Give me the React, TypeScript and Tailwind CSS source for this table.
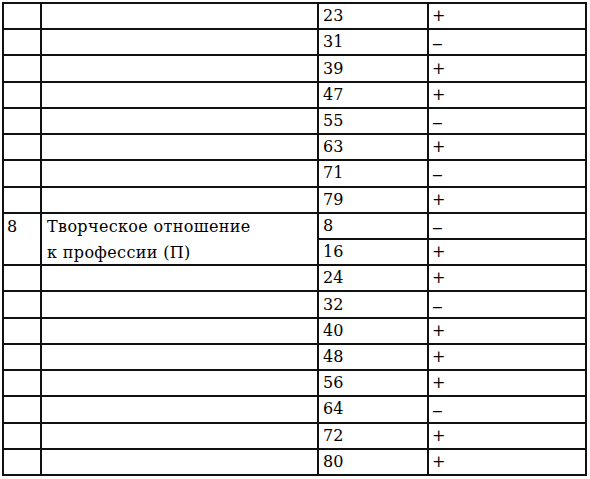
const rows: { n?: string; label?: string[]; key: string; sign: string }[] = [
  { key: "23", sign: "+" },
  { key: "31", sign: "–" },
  { key: "39", sign: "+" },
  { key: "47", sign: "+" },
  { key: "55", sign: "–" },
  { key: "63", sign: "+" },
  { key: "71", sign: "–" },
  { key: "79", sign: "+" },
  { n: "8", label: ["Творческое отношение", "к профессии (П)"], key: "8", sign: "–" },
  { key: "16", sign: "+" },
  { key: "24", sign: "+" },
  { key: "32", sign: "–" },
  { key: "40", sign: "+" },
  { key: "48", sign: "+" },
  { key: "56", sign: "+" },
  { key: "64", sign: "–" },
  { key: "72", sign: "+" },
  { key: "80", sign: "+" },
];

const cell = "border-r-2 border-b-2 border-[#111] flex items-center leading-[26px]";

function Sign({ s }: { s: string }) {
  if (s === "+") return <span>+</span>;
  // the dash in the source is wider and sits lower than a plain en dash
  return <span className="inline-block origin-left scale-x-[1.35] translate-y-[2px]">–</span>;
}

export default function App() {
  return (
    <div className="w-[590px] h-[479px] bg-white overflow-hidden pt-[2px] pl-[2px]">
      <div
        className="grid grid-cols-[38px_277px_110px_158px] auto-rows-[26.22px] w-max border-l-2 border-t-2 border-[#111] text-[16px] text-black"
        style={{ fontFamily: '"DejaVu Serif", "Liberation Serif", serif' }}
      >
        {rows.map((r, i) => {
          const merged = i === 8;
          const skip = i === 9;
          return (
            <div key={r.key} className="contents">
              {merged && (
                <>
                  <div className={`${cell} row-span-2 !items-start pl-[3px]`}>{r.n}</div>
                  <div className={`${cell} row-span-2 !items-start flex-col pl-[5px] tracking-[0.35px]`}>
                    {r.label!.map((l) => (
                      <span key={l}>{l}</span>
                    ))}
                  </div>
                </>
              )}
              {!merged && !skip && (
                <>
                  <div className={cell}></div>
                  <div className={cell}></div>
                </>
              )}
              <div className={`${cell} pl-[4px]`}>{r.key}</div>
              <div className={`${cell} pl-[3px]`}>
                <Sign s={r.sign} />
              </div>
            </div>
          );
        })}
      </div>
    </div>
  );
}
